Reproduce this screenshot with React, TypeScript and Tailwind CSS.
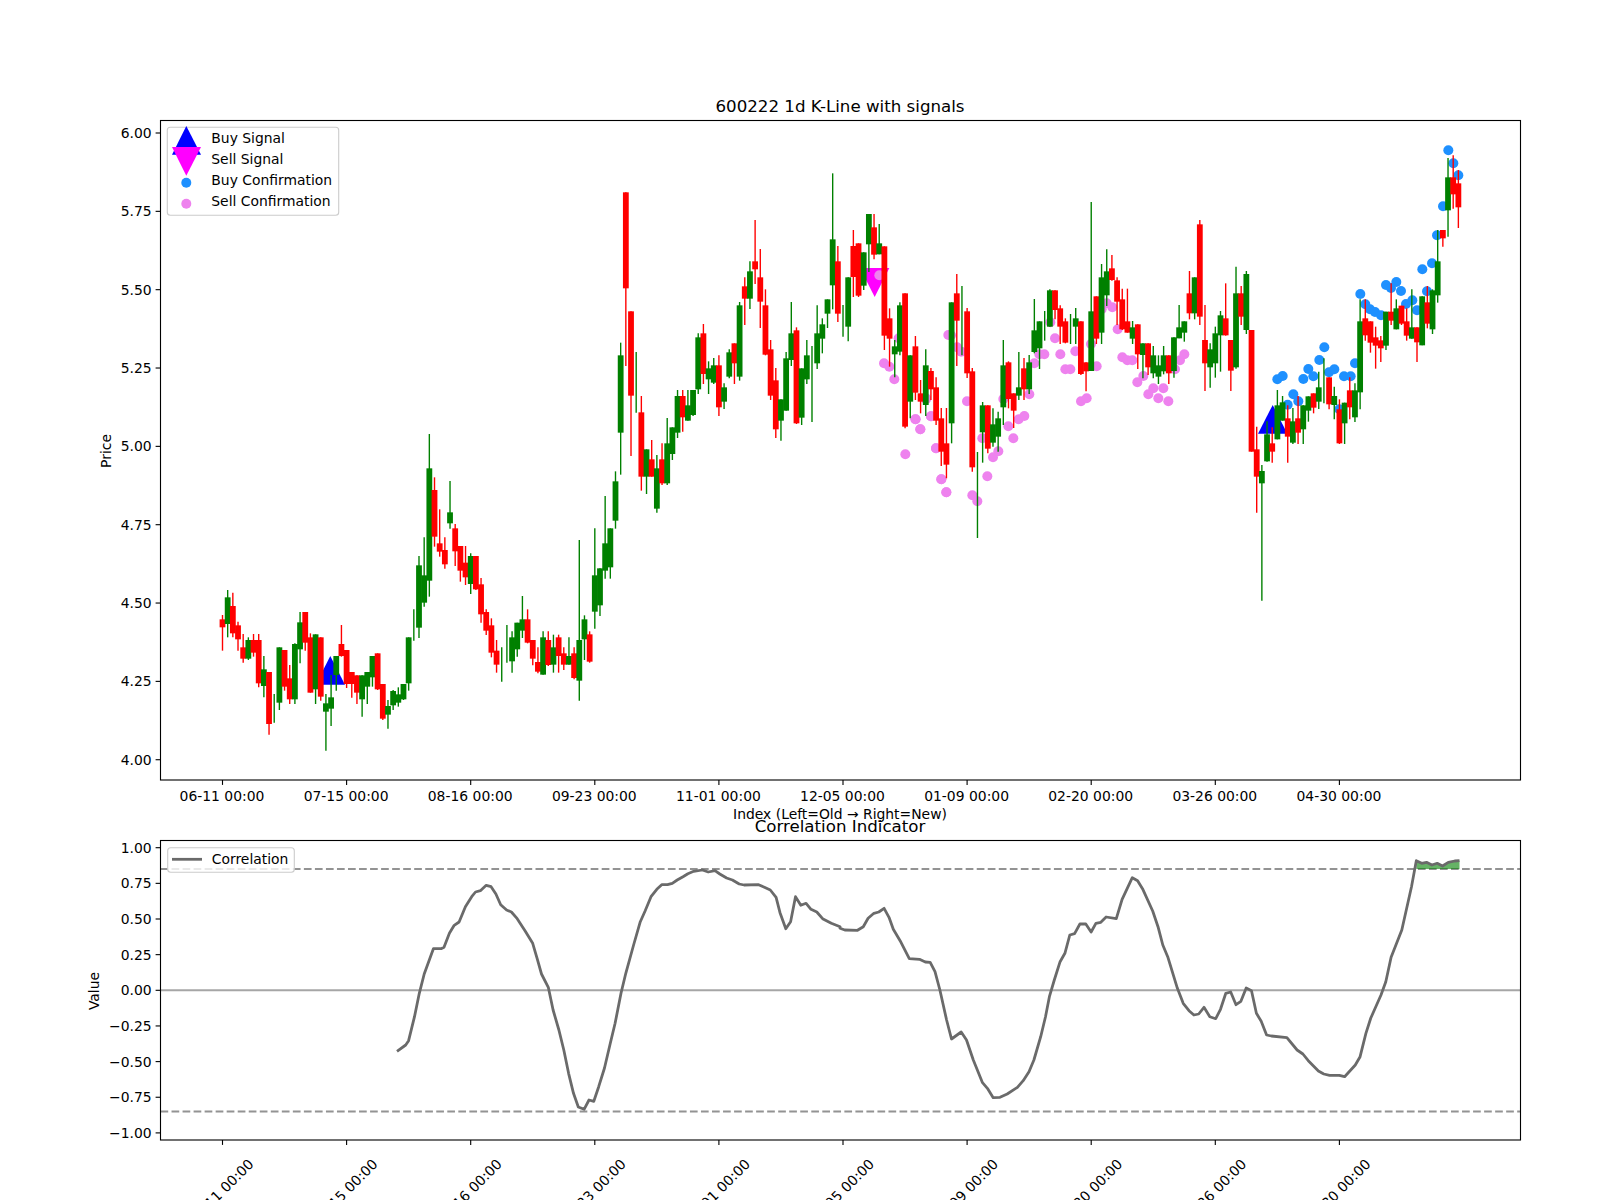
type Candle = [string, number, number, number, number];

// values are read off 3x crops, so y = base + v / 3
const candlesA: Candle[] = [
  ["r", 645, 658, 682, 752], ["g", 570, 592, 672, 712], ["r", 578, 618, 700, 712], ["r", 665, 676, 718, 752],
  ["r", 702, 742, 776, 788], ["g", 712, 720, 776, 780], ["r", 702, 720, 758, 770], ["r", 702, 720, 850, 862],
  ["g", 768, 808, 858, 892], ["r", 816, 816, 972, 1004], ["g", 882, 0, 0, 968], ["g", 742, 742, 908, 930],
  ["r", 750, 750, 860, 872], ["r", 795, 835, 898, 912], ["g", 730, 732, 898, 912], ["g", 636, 667, 748, 790],
  ["r", 636, 636, 728, 752], ["r", 700, 712, 878, 878], ["g", 703, 703, 868, 912], ["r", 712, 712, 890, 902],
  ["g", 882, 910, 935, 1052], ["g", 825, 892, 926, 978], ["g", 768, 768, 825, 872], ["r", 675, 732, 768, 770],
  ["r", 750, 750, 852, 864], ["r", 816, 816, 852, 893], ["r", 826, 826, 878, 912], ["g", 826, 826, 898, 950],
  ["g", 816, 816, 860, 912], ["g", 768, 768, 832, 860], ["r", 760, 760, 868, 870], ["r", 852, 852, 956, 960],
  ["g", 900, 918, 944, 986], ["g", 870, 873, 916, 930], ["g", 862, 883, 908, 920], ["g", 852, 852, 898, 900],
  ["g", 712, 712, 850, 872], ["g", 628, 0, 0, 722], ["g", 468, 496, 683, 714], ["g", 412, 526, 608, 620],
  ["g", 102, 205, 542, 590], ["r", 232, 270, 410, 440], ["r", 328, 430, 455, 470], ["r", 412, 450, 493, 506],
  ["g", 243, 337, 370, 386], ["r", 372, 385, 454, 498], ["r", 438, 438, 512, 545], ["r", 438, 488, 532, 555],
  ["g", 460, 468, 552, 582], ["r", 468, 468, 568, 570], ["r", 534, 553, 643, 668], ["r", 628, 636, 692, 705],
  ["r", 655, 676, 758, 772], ["r", 720, 752, 794, 818], ["g", 742, 0, 0, 845], ["g", 675, 0, 0, 788],
  ["g", 694, 712, 784, 818], ["g", 668, 668, 748, 770], ["g", 588, 658, 692, 714], ["r", 628, 658, 728, 730],
  ["r", 720, 720, 776, 796], ["r", 742, 786, 815, 820], ["g", 694, 712, 824, 824], ["r", 694, 720, 795, 798],
  ["g", 704, 742, 794, 818], ["r", 704, 712, 768, 818], ["r", 742, 760, 794, 810], ["g", 712, 768, 794, 794],
  ["r", 742, 760, 834, 838], ["g", 420, 720, 842, 902], ["g", 646, 658, 718, 780], ["r", 694, 703, 785, 788],
  ["g", 385, 526, 635, 686], ["g", 505, 505, 616, 648], ["g", 288, 430, 512, 536], ["g", 385, 385, 502, 536],
  ["g", 214, 244, 362, 386], ["g", -172, -134, 98, 224],
];

const candlesB: Candle[] = [
  ["r", 67, 67, 355, 588], ["r", 424, 424, 677, 858], ["g", 546, 0, 0, 728], ["r", 678, 727, 920, 962],
  ["g", 838, 838, 920, 972], ["r", 810, 868, 920, 920], ["g", 855, 895, 1016, 1028], ["r", 820, 868, 940, 945],
  ["g", 744, 820, 940, 945], ["g", 772, 772, 852, 870], ["g", 660, 678, 788, 804], ["r", 660, 678, 742, 785],
  ["g", 660, 706, 752, 752], ["g", 660, 660, 735, 738], ["g", 490, 502, 658, 672], ["r", 462, 490, 612, 642],
  ["g", 574, 595, 628, 672], ["g", 564, 586, 638, 642], ["r", 556, 586, 712, 738], ["g", 640, 652, 695, 717],
  ["g", 538, 547, 620, 625], ["r", 520, 520, 580, 642], ["g", 396, 406, 620, 632], ["r", 322, 349, 386, 465],
  ["g", 274, 304, 386, 417], ["r", 150, 274, 298, 342], ["r", 237, 322, 395, 474], ["r", 358, 406, 554, 556],
  ["r", 510, 538, 677, 690], ["r", 594, 631, 778, 804], ["g", 688, 688, 752, 812], ["g", 546, 565, 722, 722],
  ["g", 396, 490, 570, 588], ["r", 472, 481, 760, 762], ["g", 595, 595, 743, 765], ["g", 510, 556, 628, 642],
  ["g", 528, 0, 0, 756], ["g", 406, 490, 580, 597], ["g", 445, 463, 506, 550], ["g", 388, 388, 431, 474],
  ["g", 10, 208, 346, 418], ["r", 228, 274, 431, 456], ["g", 405, 0, 0, 500], ["g", 322, 322, 470, 514],
  ["r", 180, 228, 321, 381], ["r", 220, 220, 377, 381], ["g", 247, 247, 347, 360], ["g", 132, 132, 223, 306],
  ["r", 132, 172, 254, 268], ["g", 162, 220, 253, 253], ["r", 229, 229, 497, 540], ["r", 415, 445, 506, 590],
  ["g", 510, 529, 553, 622], ["g", 397, 406, 545, 556], ["r", 370, 370, 770, 775], ["g", 556, 556, 695, 745],
  ["r", 498, 529, 668, 690], ["r", 630, 670, 695, 730], ["g", 538, 586, 705, 738], ["r", 594, 603, 658, 690],
  ["r", 622, 652, 752, 765], ["r", 714, 745, 845, 888], ["r", 714, 820, 884, 925],
];

const candlesC: Candle[] = [
  ["g", 337, 337, 700, 760], ["r", 252, 310, 392, 528], ["g", 288, 0, 0, 496], ["r", 354, 364, 550, 564],
  ["r", 534, 544, 832, 845], ["g", 786, 0, 0, 1044], ["g", 636, 646, 727, 818], ["r", 646, 646, 776, 790],
  ["g", 655, 703, 758, 770], ["g", 665, 685, 740, 785], ["g", 450, 526, 652, 705], ["r", 514, 517, 627, 655],
  ["r", 610, 610, 662, 714], ["g", 486, 592, 617, 630], ["r", 504, 535, 598, 630], ["g", 495, 517, 598, 612],
  ["g", 327, 421, 486, 490], ["g", 394, 394, 475, 537], ["g", 363, 0, 0, 452], ["g", 298, 301, 410, 410],
  ["r", 301, 301, 360, 388], ["r", 346, 355, 410, 462], ["r", 385, 394, 458, 460], ["g", 372, 0, 0, 462],
  ["g", 354, 385, 410, 462], ["r", 394, 394, 552, 555], ["r", 517, 517, 544, 604], ["g", 36, 364, 543, 543],
  ["r", 319, 319, 446, 462], ["g", 222, 262, 428, 462], ["g", 178, 244, 316, 348], ["r", 195, 235, 270, 272],
  ["r", 262, 271, 335, 405], ["r", 296, 328, 418, 420], ["r", 296, 394, 428, 428], ["g", 393, 412, 446, 462],
  ["r", 403, 403, 493, 537], ["g", 460, 460, 495, 565], ["r", 460, 460, 532, 555], ["g", 468, 496, 550, 565],
  ["g", 496, 526, 560, 582], ["g", 468, 496, 544, 553], ["r", 496, 496, 550, 582], ["g", 442, 442, 543, 563],
  ["g", 345, 412, 445, 445], ["g", 394, 394, 428, 455], ["r", 243, 310, 370, 388], ["g", 262, 262, 370, 388],
  ["r", 90, 103, 380, 405],
];

const candlesD: Candle[] = [
  ["r", 525, 630, 700, 783], ["g", 640, 658, 712, 773], ["g", 590, 610, 700, 743], ["g", 543, 556, 616, 725],
  ["r", 460, 565, 616, 617], ["r", 630, 630, 722, 783], ["g", 410, 490, 712, 716], ["r", 468, 490, 560, 585],
  ["g", 423, 432, 600, 612], ["r", 600, 600, 965, 965], ["r", 890, 958, 1040, 1148], ["g", 1005, 1023, 1060, 1412],
  ["g", 874, 913, 994, 995], ["r", 892, 940, 965, 998], ["g", 780, 826, 928, 928], ["g", 798, 817, 872, 872],
  ["r", 826, 865, 920, 998], ["g", 834, 874, 938, 942], ["r", 798, 865, 908, 942], ["g", 826, 826, 898, 942],
  ["g", 799, 799, 842, 875], ["r", 790, 790, 833, 850], ["g", 725, 772, 815, 837], ["g", 685, 0, 0, 820],
  ["r", 742, 742, 823, 838], ["g", 770, 798, 825, 868], ["r", 808, 838, 940, 942], ["g", 818, 818, 880, 942],
  ["r", 742, 781, 832, 868], ["g", 760, 781, 862, 876], ["g", 508, 574, 787, 838], ["r", 508, 565, 616, 632],
  ["r", 574, 574, 638, 668], ["r", 590, 622, 647, 716], ["r", 618, 631, 655, 696], ["g", 545, 545, 647, 660],
  ["r", 460, 545, 572, 585], ["g", 508, 535, 598, 598], ["r", 527, 527, 581, 585], ["r", 535, 574, 617, 632],
  ["g", 478, 592, 626, 626], ["r", 592, 592, 637, 696], ["g", 499, 499, 646, 646], ["r", 468, 517, 581, 595],
  ["g", 478, 481, 598, 612], ["g", 300, 394, 496, 518], ["r", 300, 300, 325, 350], ["g", 84, 142, 241, 320],
  ["r", 76, 142, 193, 236], ["r", 120, 160, 232, 294],
];

const rebase = (rows: Candle[], base: number): Candle[] =>
  rows.map(([c, wt, bt, bb, wb]) => [
    c,
    base + wt / 3,
    bt === bb ? 0 : base + bt / 3,
    bt === bb ? 0 : base + bb / 3,
    base + wb / 3,
  ]);

const candles = [
  ...rebase(candlesA, 400),
  ...rebase(candlesB, 170),
  ...rebase(candlesC, 190),
  ...rebase(candlesD, 130),
];

const pinkDots3 = [
  [838, 316], [852, 580], [868, 590], [883, 628], [916, 853], [896, 505], [947, 748], [961, 778], [978, 685],
  [993, 739], [1008, 835], [1024, 928], [1039, 967], [1045, 495],
];
const pinkDots4 = [
  [46, 688], [61, 718], [78, 628], [93, 679], [108, 775], [124, 868], [139, 907], [153, 436], [171, 472], [184, 485],
  [201, 634], [217, 916], [232, 934], [247, 745], [262, 859], [279, 802], [295, 784], [310, 627], [325, 709],
  [340, 745], [356, 688], [373, 678], [388, 613], [403, 520], [418, 493], [433, 493], [451, 397], [465, 445],
  [481, 493], [496, 538], [511, 538], [526, 484], [543, 634], [560, 625], [573, 462], [590, 529], [605, 358],
  [620, 340], [637, 352], [653, 418], [667, 502], [682, 511], [697, 511], [712, 577], [730, 558], [745, 613],
  [760, 595], [775, 625], [790, 595], [805, 634], [825, 538], [840, 511], [853, 493],
];
const blueDots5 = [
  [232, 748], [248, 738], [263, 824], [280, 793], [295, 814], [310, 747], [325, 717], [340, 739], [358, 690],
  [373, 652], [387, 727], [403, 718], [418, 838], [432, 739], [452, 739], [465, 700], [481, 492], [496, 523],
  [510, 538], [525, 546], [543, 556], [558, 465], [573, 474], [589, 456], [603, 483], [618, 522], [637, 511],
  [651, 541], [681, 484], [696, 400], [667, 418], [711, 316], [729, 229], [745, 61], [760, 100], [775, 136],
];

const pinkDots = [
  ...pinkDots3.map(([x, y]) => [600 + x / 3, 170 + y / 3]),
  ...pinkDots4.map(([x, y]) => [900 + x / 3, 190 + y / 3]),
];
const blueDots = blueDots5.map(([x, y]) => [1200 + x / 3, 130 + y / 3]);

// correlation line, read off the two lower crops (x scale 2.063, y scale 3)
const corrLeft = [
  [654, 814], [672, 795], [678, 782], [690, 710], [700, 640], [710, 582], [729, 506], [745, 506], [751, 502],
  [762, 460], [772, 436], [782, 426], [795, 380], [808, 350], [816, 336], [826, 332], [838, 316], [848, 320],
  [858, 342], [868, 374], [880, 390], [890, 396], [902, 416], [918, 452], [934, 490], [943, 535], [952, 582],
  [966, 622], [976, 690], [988, 750], [998, 810], [1008, 880], [1018, 940], [1028, 981], [1040, 988], [1050, 960],
  [1060, 964], [1070, 920], [1082, 864], [1094, 790], [1104, 730], [1116, 640], [1126, 580], [1142, 495],
  [1156, 425], [1166, 392], [1178, 350], [1190, 328], [1200, 314], [1212, 314], [1222, 310], [1232, 300],
  [1244, 290], [1254, 281], [1266, 274], [1284, 270], [1296, 276], [1310, 272], [1320, 282], [1334, 294],
  [1346, 300], [1360, 312], [1370, 315], [1400, 314], [1412, 322], [1424, 330], [1436, 352], [1444, 398],
  [1456, 446], [1466, 425], [1476, 350], [1487, 376], [1498, 370], [1508, 388], [1520, 396], [1532, 416],
  [1550, 430], [1568, 440],
];
const corrRight = [
  [0, 445], [10, 450], [36, 451], [48, 440], [58, 415], [70, 400], [80, 396], [91, 385], [101, 412], [110, 448],
  [124, 482], [143, 536], [164, 538], [176, 546], [186, 547], [196, 575], [206, 630], [220, 720], [230, 777],
  [250, 756], [261, 780], [275, 840], [294, 908], [304, 925], [316, 953], [330, 952], [345, 942], [366, 922],
  [378, 902], [390, 875], [400, 840], [414, 770], [424, 710], [432, 650], [442, 600], [454, 545], [464, 520],
  [474, 465], [484, 461], [495, 432], [507, 432], [518, 456], [528, 430], [538, 427], [549, 411], [570, 416],
  [582, 358], [603, 293], [614, 302], [624, 326], [645, 393], [656, 440], [666, 495], [676, 530], [696, 625],
  [708, 670], [720, 692], [730, 705], [740, 702], [751, 682], [763, 710], [775, 716], [785, 688], [796, 640],
  [806, 636], [817, 674], [827, 664], [838, 624], [849, 632], [859, 700], [869, 724], [880, 765], [890, 768],
  [922, 773], [943, 810], [955, 822], [966, 842], [987, 873], [998, 882], [1010, 886], [1030, 886], [1041, 890],
  [1063, 855], [1073, 830], [1085, 760], [1095, 714], [1116, 645], [1126, 605], [1137, 532], [1159, 450],
  [1179, 320], [1189, 242], [1200, 250], [1210, 247], [1221, 255], [1232, 250], [1243, 258], [1255, 247],
  [1268, 243], [1278, 242],
];
const corrTail = corrRight.slice(corrRight.findIndex(([x]) => x === 1189));

const corrX = (x: number, start: number) => start + x / 2.063;
const corrY = (y: number) => 780 + y / 3;
const corrPoints = [
  ...corrLeft.map(([x, y]) => `${corrX(x, 80).toFixed(1)},${corrY(y).toFixed(1)}`),
  ...corrRight.map(([x, y]) => `${corrX(x, 840).toFixed(1)},${corrY(y).toFixed(1)}`),
].join(" ");
const fillPoints = [
  ...corrTail.map(([x, y]) => `${corrX(x, 840).toFixed(1)},${corrY(y).toFixed(1)}`),
  `${corrX(1278, 840).toFixed(1)},869`,
  `${corrX(1189, 840).toFixed(1)},869`,
].join(" ");

const dates = ["06-11", "07-15", "08-16", "09-23", "11-01", "12-05", "01-09", "02-20", "03-26", "04-30"];
const tickX = (i: number) => 222.5 + i * 124.1;
const candleX = (i: number) => 222.5 + i * 5.171;

const priceTicks = ["6.00", "5.75", "5.50", "5.25", "5.00", "4.75", "4.50", "4.25", "4.00"];
const valueTicks = [1, 0.75, 0.5, 0.25, 0, -0.25, -0.5, -0.75, -1];
const priceY = (i: number) => 133 + i * 78.34;
const valueY = (v: number) => 990.3 - 142.6 * v;

function KLine() {
  return (
    <g>
      {candles.map(([c, wickTop, bodyTop, bodyBottom, wickBottom], i) => {
        const x = candleX(i);
        const color = c === "r" ? "#ff0000" : "#008000";
        return (
          <g key={i}>
            <line x1={x} x2={x} y1={wickTop} y2={wickBottom} stroke={color} strokeWidth={1.39} />
            {bodyBottom > bodyTop && (
              <rect x={x - 2.9} y={bodyTop} width={5.8} height={bodyBottom - bodyTop} fill={color} />
            )}
          </g>
        );
      })}
    </g>
  );
}

function Frame({ top, bottom }: { top: number; bottom: number }) {
  return (
    <>
      <rect x={160.5} y={top} width={1360} height={bottom - top} fill="none" stroke="#000" strokeWidth={1.11} />
      {dates.map((_, i) => (
        <line key={i} x1={tickX(i)} x2={tickX(i)} y1={bottom} y2={bottom + 4.9} stroke="#000" strokeWidth={1.11} />
      ))}
    </>
  );
}

function YTick({ y, label }: { y: number; label: string }) {
  return (
    <>
      <line x1={155.6} x2={160.5} y1={y} y2={y} stroke="#000" strokeWidth={1.11} />
      <text x={151.6} y={y + 5} textAnchor="end">
        {label}
      </text>
    </>
  );
}

export default function App() {
  return (
    <div className="h-[1200px] w-[1600px] overflow-hidden bg-white">
      <svg
        width={1600}
        height={1200}
        viewBox="0 0 1600 1200"
        className="block font-['DejaVu_Sans',sans-serif] text-[13.9px]"
      >
        <text x={840} y={111.7} textAnchor="middle" className="text-[16.67px]">
          600222 1d K-Line with signals
        </text>

        {/* price panel */}
        <polygon points="330.3,656 315.7,684.7 345,684.7" fill="#0000ff" />
        <polygon points="1272.7,405 1258,433.7 1287.4,433.7" fill="#0000ff" />
        <polygon points="860,268 889.3,268 874.7,297" fill="#ff00ff" />
        {blueDots.map(([x, y], i) => (
          <circle key={i} cx={x} cy={y} r={5} fill="#1e90ff" />
        ))}
        {pinkDots.map(([x, y], i) => (
          <circle key={i} cx={x} cy={y} r={5} fill="#ee82ee" />
        ))}
        <KLine />
        <Frame top={120.5} bottom={780} />
        {priceTicks.map((t, i) => (
          <YTick key={t} y={priceY(i)} label={t} />
        ))}
        {dates.map((d, i) => (
          <text key={d} x={tickX(i) - 0.5} y={800.5} textAnchor="middle">
            {d} 00:00
          </text>
        ))}
        <text x={840} y={819.3} textAnchor="middle">
          Index (Left=Old → Right=New)
        </text>
        <text transform="translate(111 451) rotate(-90)" textAnchor="middle">
          Price
        </text>

        {/* price legend */}
        <rect x={167.3} y={127.3} width={171.4} height={88} rx={3} fill="#fff" fillOpacity={0.8} stroke="#ccc" strokeWidth={1.11} />
        <polygon points="186.3,126 172,154.7 201,154.7" fill="#0000ff" />
        <polygon points="172,147 201,147 186.3,175.7" fill="#ff00ff" />
        <circle cx={186.3} cy={182.7} r={5} fill="#1e90ff" />
        <circle cx={186.3} cy={203.7} r={5} fill="#ee82ee" />
        <text x={211.3} y={143.3}>Buy Signal</text>
        <text x={211.3} y={164.3}>Sell Signal</text>
        <text x={211.3} y={185.3}>Buy Confirmation</text>
        <text x={211.3} y={206}>Sell Confirmation</text>

        {/* correlation panel */}
        <text x={840} y={831.7} textAnchor="middle" className="text-[16.67px]">
          Correlation Indicator
        </text>
        <line x1={160.5} x2={1520.5} y1={990.3} y2={990.3} stroke="#808080" strokeOpacity={0.7} strokeWidth={2.08} />
        <line x1={160.5} x2={1520.5} y1={869} y2={869} stroke="#808080" strokeOpacity={0.85} strokeWidth={2.08} strokeDasharray="7.7 3.33" />
        <line x1={160.5} x2={1520.5} y1={1111.5} y2={1111.5} stroke="#808080" strokeOpacity={0.85} strokeWidth={2.08} strokeDasharray="7.7 3.33" />
        <polygon points={fillPoints} fill="#008000" fillOpacity={0.6} />
        <polyline points={corrPoints} fill="none" stroke="#6a6a6a" strokeWidth={2.78} strokeLinejoin="round" />
        <Frame top={840.5} bottom={1140} />
        {valueTicks.map((v) => (
          <YTick key={v} y={valueY(v)} label={`${v < 0 ? "−" : ""}${Math.abs(v).toFixed(2)}`} />
        ))}
        {dates.map((d, i) => (
          <text key={d} transform={`translate(${tickX(i) + 2} 1195) rotate(-45)`} textAnchor="middle">
            {d} 00:00
          </text>
        ))}
        <text transform="translate(98.5 991) rotate(-90)" textAnchor="middle">
          Value
        </text>

        {/* correlation legend */}
        <rect x={167.7} y={847.7} width={126.6} height={24.6} rx={3} fill="#fff" fillOpacity={0.8} stroke="#ccc" strokeWidth={1.11} />
        <line x1={172} x2={202} y1={859.3} y2={859.3} stroke="#6a6a6a" strokeWidth={2.78} />
        <text x={211.8} y={864}>Correlation</text>
      </svg>
    </div>
  );
}
